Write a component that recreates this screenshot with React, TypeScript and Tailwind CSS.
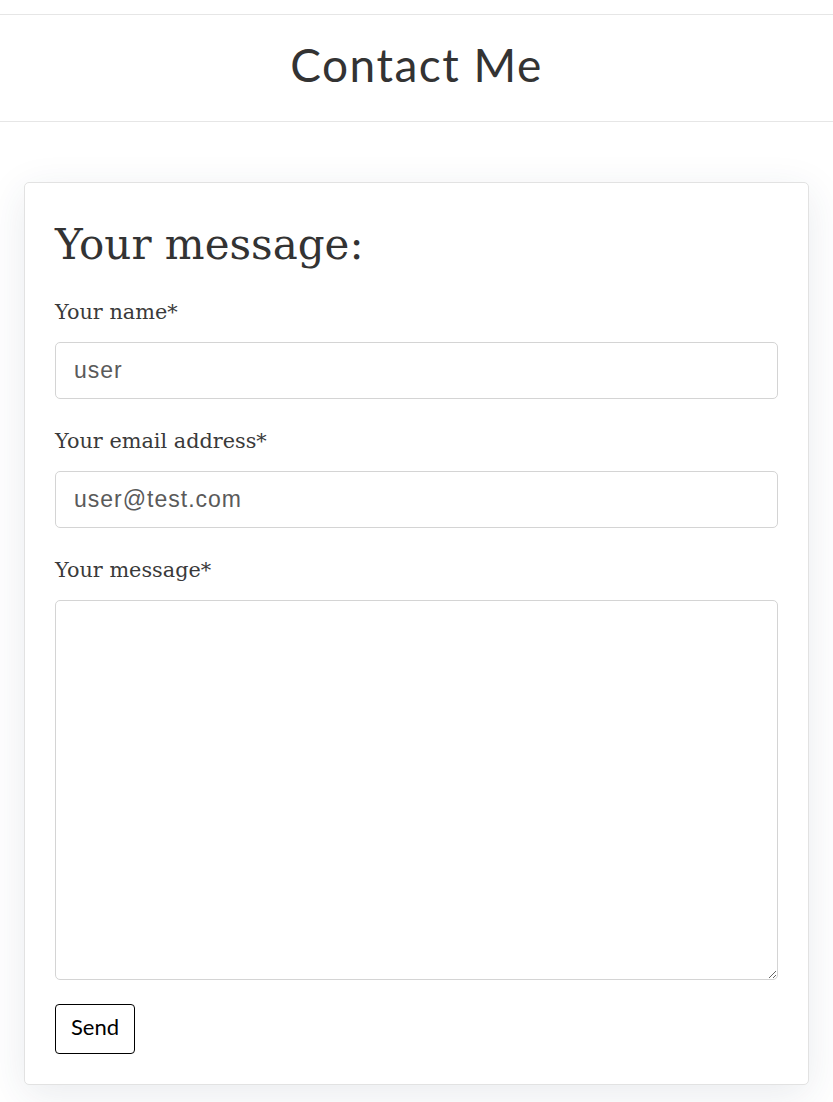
export default function App() {
  const serif = { fontFamily: '"DejaVu Serif", serif' };
  return (
    <div className="min-h-[1102px] bg-white overflow-hidden">
      <div className="h-[14px]" />
      <header className="border-t border-b border-[#e6e6e6] h-[108px] flex items-center justify-center">
        <h1 className="text-[46px] text-[#333] tracking-[1.5px] font-['Lato',sans-serif] leading-none pb-[6px]">Contact Me</h1>
      </header>
      <div className="px-[24px] pt-[60px]">
        <div className="bg-white border border-[#e2e2e2] rounded-[5px] shadow-[0_10px_40px_rgba(40,60,90,0.1)] px-[30px] pt-[30px] pb-[30px]">
          <h2 className="text-[42px] leading-[64px] text-[#333]" style={serif}>Your message:</h2>
          <form className="mt-[22px]" onSubmit={(e) => e.preventDefault()}>
            <label className="block text-[20.8px] leading-[26px] text-[#3a3a3a]" style={serif}>Your name*</label>
            <input
              defaultValue="user"
              className="mt-[17px] block w-full h-[57px] border border-[#d4d4d4] rounded-[5px] px-[18px] text-[23px] tracking-[1px] text-[#5a5a5a] font-['Liberation_Sans',sans-serif] outline-none"
            />
            <label className="block mt-[29px] text-[20.8px] leading-[26px] text-[#3a3a3a]" style={serif}>Your email address*</label>
            <input
              defaultValue="user@test.com"
              className="mt-[17px] block w-full h-[57px] border border-[#d4d4d4] rounded-[5px] px-[18px] text-[23px] tracking-[1px] text-[#5a5a5a] font-['Liberation_Sans',sans-serif] outline-none"
            />
            <label className="block mt-[29px] text-[20.8px] leading-[26px] text-[#3a3a3a]" style={serif}>Your message*</label>
            <textarea className="mt-[17px] block w-full h-[380px] border border-[#d4d4d4] rounded-[5px] px-[18px] py-[12px] text-[22px] outline-none" />
            <button type="submit" className="mt-[24px] block w-[80px] h-[50px] border border-black rounded-[4px] text-[22px] text-black font-['Lato',sans-serif] pb-[5px]">Send</button>
          </form>
        </div>
      </div>
    </div>
  );
}
